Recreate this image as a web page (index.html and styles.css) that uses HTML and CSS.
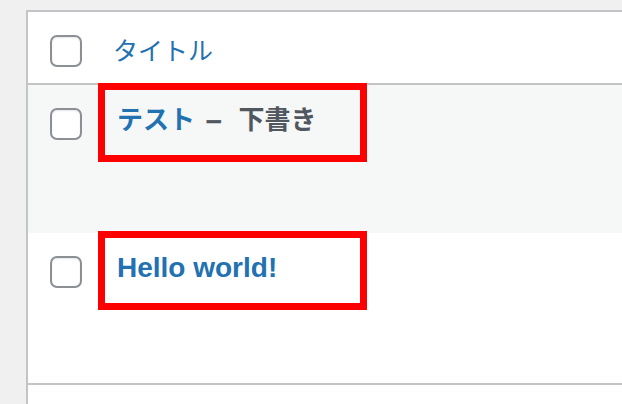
FILE: index.html
```html
<!DOCTYPE html>
<html lang="ja">

<head>
    <title>投稿一覧</title>
    <meta charset="utf-8" />
    <link rel="stylesheet" href="styles.css">
</head>

<body>
    <div class="wrap">
        <div class="posts">
            <div class="row head">
                <div class="check"><input type="checkbox" class="cb"></div>
                <div class="title"><a href="#" class="col-name">タイトル</a></div>
            </div>
            <div class="row post alt">
                <div class="check"><input type="checkbox" class="cb"></div>
                <div class="title">
                    <strong><a href="#" class="row-title ja">テスト</a><span class="state"><span class="dash">–</span><span class="ja">下書き</span></span></strong>
                    <span class="mark"></span>
                </div>
            </div>
            <div class="row post">
                <div class="check"><input type="checkbox" class="cb"></div>
                <div class="title">
                    <strong><a href="#" class="row-title">Hello world!</a></strong>
                    <span class="mark"></span>
                </div>
            </div>
            <div class="row foot"></div>
        </div>
    </div>
</body>

</html>
```

FILE: styles.css
```css
html,
body {
    margin: 0;
    padding: 0;
    background: #f0f0f1;
    overflow: hidden;
    font-family: "Liberation Sans", "Noto Sans CJK JP", sans-serif;
}

.wrap {
    padding: 10px 0 0 26px;
}

.posts {
    width: calc(100% + 20px);
    background: #fff;
    border-top: 2px solid #c3c4c7;
    border-left: 2px solid #c3c4c7;
}

.row {
    display: flex;
    position: relative;
}

.check {
    width: 89px;
    flex: none;
    padding: 23px 0 0 22px;
    box-sizing: border-box;
}

.cb {
    -webkit-appearance: none;
    appearance: none;
    display: block;
    margin: 0;
    width: 32px;
    height: 32px;
    border: 2px solid #8c8f94;
    border-radius: 7px;
    background: #fff;
    box-shadow: inset 0 1px 2px rgba(0, 0, 0, 0.1);
    box-sizing: border-box;
}

.head {
    height: 71px;
    border-bottom: 2px solid #c3c4c7;
}

.head .check {
    width: 85px;
}

.head .title {
    padding-top: 21px;
    font-size: 25px;
    line-height: 36px;
}

.col-name {
    color: #2271b1;
    text-decoration: none;
}

.post {
    height: 148px;
}

.post+.post {
    height: 150px;
    border-bottom: 2px solid #c3c4c7;
}

.alt {
    background: #f6f7f7;
}

.post .title {
    padding-top: 17px;
    font-size: 28px;
    line-height: 36px;
}

.ja {
    font-size: 26px;
}

.row-title {
    color: #2271b1;
    text-decoration: none;
}

.state {
    color: #50575e;
}

.dash {
    display: inline-block;
    margin: 0 17px 0 11px;
    -webkit-text-stroke: 0.6px #50575e;
}

.mark {
    position: absolute;
    top: -2px;
    left: 70px;
    width: 269px;
    height: 79px;
    border: 7px solid #ff0000;
    box-sizing: border-box;
}

.foot {
    height: 40px;
}
```
